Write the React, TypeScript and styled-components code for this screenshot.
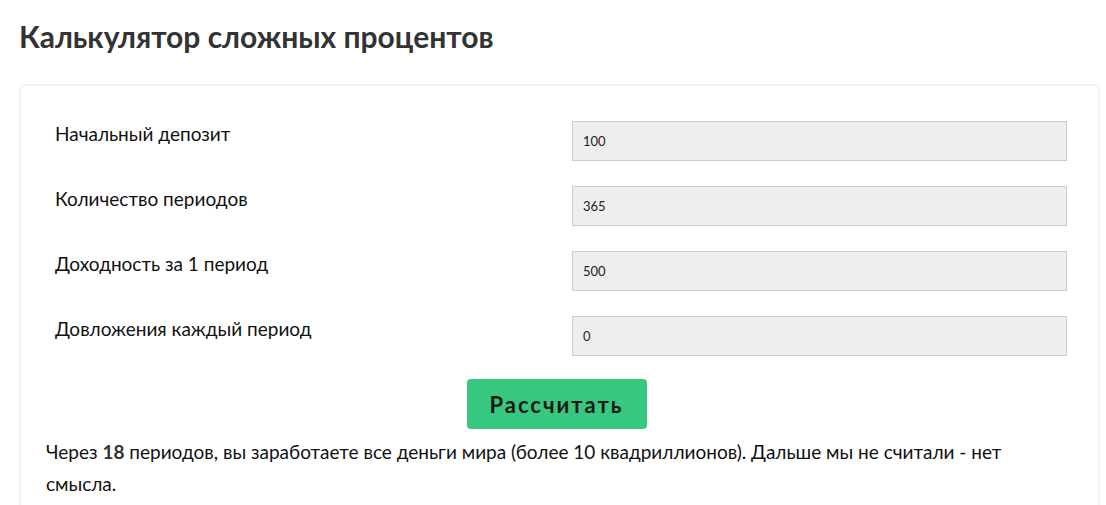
import React, { useState } from "react";
import styled, { createGlobalStyle } from "styled-components";

const GlobalStyle = createGlobalStyle`
  body {
    margin: 0;
    background: #fff;
    font-family: "Lato", "Open Sans", sans-serif;
    color: #1c1c1c;
  }
`;

const FIELDS = [
  { key: "deposit", label: "Начальный депозит", value: "100" },
  { key: "periods", label: "Количество периодов", value: "365" },
  { key: "rate", label: "Доходность за 1 период", value: "500" },
  { key: "topup", label: "Довложения каждый период", value: "0" },
];

const App = () => {
  const [values, updateValues] = useState<Record<string, string>>(
    Object.fromEntries(FIELDS.map(f => [f.key, f.value]))
  );

  return (
    <Page>
      <GlobalStyle />
      <Title>Калькулятор сложных процентов</Title>
      <Card>
        <Form>
          {FIELDS.map(field => (
            <Row key={field.key}>
              <Label>{field.label}</Label>
              <Input
                value={values[field.key]}
                onChange={e => updateValues({ ...values, [field.key]: e.target.value })}
              />
            </Row>
          ))}
        </Form>
        <ButtonWrapper>
          <Button>Рассчитать</Button>
        </ButtonWrapper>
        <Result>
          Через <b>18</b> периодов, вы заработаете все деньги мира (более 10 квадриллионов).
          Дальше мы не считали - нет смысла.
        </Result>
      </Card>
    </Page>
  );
};

const Page = styled.div`
  padding: 14px 6px 0 19px;
`;

const Title = styled.h1`
  margin: 0 0 26px;
  font-size: 30px;
  font-weight: 700;
  color: #333;
  line-height: 44px;
`;

const Card = styled.div`
  border: 2px solid #f3f3f3;
  border-radius: 6px;
  padding: 35px 31px 20px 25px;
`;

const Form = styled.div`
  display: flex;
  flex-direction: column;
  gap: 25px;
`;

const Row = styled.div`
  display: grid;
  grid-template-columns: 1fr 495px;
  align-items: start;
  padding-left: 9px;
`;

const Label = styled.div`
  font-size: 19px;
  line-height: 24px;
  padding-top: 1px;
  color: #111;
`;

const Input = styled.input`
  box-sizing: border-box;
  height: 40px;
  width: 100%;
  border: 1px solid #cccccc;
  background: #eeeeee;
  padding: 0 10px;
  font-family: "Lato", sans-serif;
  font-size: 13px;
  color: #222;
  outline: none;
`;

const ButtonWrapper = styled.div`
  display: flex;
  justify-content: center;
  margin-top: 23px;
`;

const Button = styled.button`
  width: 180px;
  height: 50px;
  border: none;
  border-radius: 4px;
  background: #37c77f;
  color: #1a1a1a;
  font-family: "Lato", sans-serif;
  font-weight: 700;
  font-size: 22px;
  letter-spacing: 2px;
  cursor: pointer;
`;

const Result = styled.p`
  margin: 7px 0 0;
  font-size: 19px;
  line-height: 32px;
  color: #111;

  b {
    font-weight: 700;
    color: #333;
  }
`;

export default App;
